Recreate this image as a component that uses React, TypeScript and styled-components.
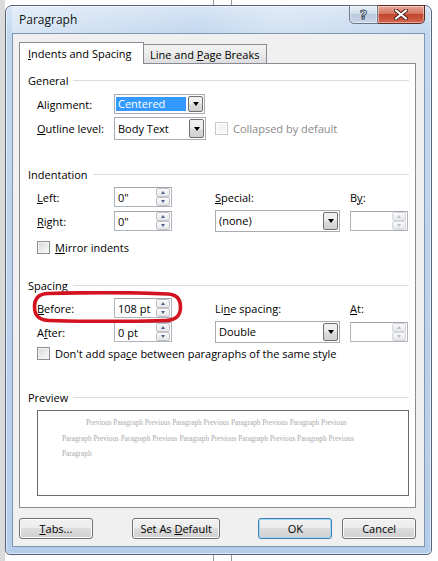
import styled, { createGlobalStyle } from "styled-components";

const GlobalStyle = createGlobalStyle`
  html, body {
    margin: 0;
    padding: 0;
  }
  body {
    font-family: "Open Sans", "Liberation Sans", sans-serif;
    font-size: 11px;
    color: #000;
  }
`;

// page behind the dialog: white sheet with two thin rules
const Page = styled.div`
  width: 438px;
  height: 561px;
  box-sizing: border-box;
  padding: 5px 6px 6px 5px;
  background:
    linear-gradient(to right, #dadada 0 5px, transparent 5px),
    linear-gradient(
      to right,
      transparent 213px,
      #9a9a9a 213px,
      #9a9a9a 214px,
      transparent 214px,
      transparent 231px,
      #9a9a9a 231px,
      #9a9a9a 232px,
      transparent 232px
    ),
    #fdfdfd;
`;

const Window = styled.div`
  width: 427px;
  height: 550px;
  box-sizing: border-box;
  border: 1px solid #56657a;
  border-radius: 7px 7px 5px 5px;
  background: linear-gradient(180deg, #d7e5f5 0, #c3d8ef 27px, #b6cde9 100%);
  box-shadow: inset 0 0 0 1px rgba(255, 255, 255, 0.55);
  display: flex;
  flex-direction: column;
  padding: 0 6px 7px 6px;
`;

const TitleBar = styled.div`
  height: 27px;
  display: flex;
  align-items: flex-start;
  justify-content: space-between;
  background: linear-gradient(
    100deg,
    rgba(255, 255, 255, 0.35) 0%,
    rgba(255, 255, 255, 0) 45%,
    rgba(255, 255, 255, 0.25) 65%,
    rgba(255, 255, 255, 0) 100%
  );
`;

const Title = styled.span`
  margin: 6px 0 0 7px;
  line-height: 16px;
  font-size: 12px;
  color: #111;
`;

const Captions = styled.div`
  display: flex;
  margin-top: -1px;
  height: 19px;
`;

const CaptionButton = styled.div<{ $kind: "help" | "close" }>`
  box-sizing: border-box;
  width: ${(p) => (p.$kind === "help" ? 29 : 47)}px;
  height: 19px;
  display: flex;
  align-items: center;
  justify-content: center;
  border: 1px solid ${(p) => (p.$kind === "help" ? "#6a7889" : "#5b2b22")};
  border-left: ${(p) => (p.$kind === "close" ? "none" : undefined)};
  border-radius: ${(p) => (p.$kind === "help" ? "0 0 0 5px" : "0 0 5px 0")};
  background: ${(p) =>
    p.$kind === "help"
      ? "linear-gradient(180deg, #e7eef7 0%, #d2deec 45%, #b9c9dc 50%, #c9d7e8 100%)"
      : "linear-gradient(180deg, #e9a899 0%, #d5745f 45%, #c2452d 50%, #d3664f 100%)"};
  box-shadow: inset 0 0 0 1px rgba(255, 255, 255, 0.45);
`;

const HelpGlyph = styled.span`
  font-family: "DejaVu Sans", sans-serif;
  font-weight: bold;
  font-size: 13px;
  line-height: 13px;
  color: #eef3f9;
  -webkit-text-stroke: 0.9px #3c4a5b;
`;

const Client = styled.div`
  flex: 1;
  background: #f0f0f0;
  border: 1px solid #8095b1;
  display: flex;
  flex-direction: column;
  padding: 8px 8px 7px 6px;
`;

const TabStrip = styled.div`
  display: flex;
  align-items: flex-end;
  height: 21px;
`;

const Tab = styled.div<{ $active?: boolean; $w: number }>`
  position: relative;
  z-index: ${(p) => (p.$active ? 1 : 0)};
  box-sizing: border-box;
  width: ${(p) => p.$w}px;
  height: ${(p) => (p.$active ? 22 : 19)}px;
  margin-bottom: ${(p) => (p.$active ? -1 : 0)}px;
  border: 1px solid #898c95;
  border-bottom: none;
  border-left: ${(p) => (p.$active ? undefined : "none")};
  background: ${(p) =>
    p.$active ? "#fff" : "linear-gradient(180deg, #f3f3f3 0%, #ebebeb 50%, #dedede 100%)"};
  display: flex;
  align-items: center;
  padding-left: ${(p) => (p.$active ? 8 : 6)}px;
  white-space: nowrap;
`;

const Panel = styled.div`
  height: 445px;
  box-sizing: border-box;
  background: #fff;
  border: 1px solid #898c95;
  padding: 9px 6px 0 8px;
  display: flex;
  flex-direction: column;
`;

const SectionHead = styled.div<{ $top?: number }>`
  display: flex;
  align-items: center;
  height: 14px;
  margin-top: ${(p) => p.$top ?? 0}px;
  white-space: nowrap;
  &::after {
    content: "";
    flex: 1;
    height: 1px;
    margin-left: 5px;
    background: #dcdcdc;
  }
`;

const FieldGrid = styled.div<{ $top: number; $rows: string; $gap: number }>`
  position: relative;
  display: grid;
  grid-template-columns: 77px 58px 43px 125px 10px 58px;
  grid-template-rows: ${(p) => p.$rows};
  row-gap: ${(p) => p.$gap}px;
  align-items: center;
  padding-left: 9px;
  margin-top: ${(p) => p.$top}px;
`;

const Cell = styled.div<{ $col: string }>`
  grid-column: ${(p) => p.$col};
  display: flex;
  align-items: center;
  white-space: nowrap;
`;

const U = styled.span`
  text-decoration: underline;
`;

const Combo = styled.div<{ $w: number; $h: number }>`
  box-sizing: border-box;
  width: ${(p) => p.$w}px;
  height: ${(p) => p.$h}px;
  border: 1px solid #a7abb2;
  background: #fff;
  display: flex;
  align-items: center;
  padding: 1px;
`;

const ComboValue = styled.span<{ $selected?: boolean }>`
  flex: 1;
  align-self: center;
  margin-right: 2px;
  padding: 0 2px;
  line-height: 14px;
  color: ${(p) => (p.$selected ? "#fff" : "#000")};
  background: ${(p) => (p.$selected ? "#3399ff" : "transparent")};
`;

const ComboArrow = styled.span`
  align-self: stretch;
  box-sizing: border-box;
  width: 15px;
  border: 1px solid #707070;
  border-radius: 2px;
  background: linear-gradient(180deg, #f2f2f2 0%, #ebebeb 50%, #dddddd 50%, #cfcfcf 100%);
  display: flex;
  align-items: center;
  justify-content: center;
  &::after {
    content: "";
    border-left: 3.5px solid transparent;
    border-right: 3.5px solid transparent;
    border-top: 4px solid #000;
  }
`;

const Spin = styled.div`
  box-sizing: border-box;
  width: 58px;
  height: 20px;
  border: 1px solid #b1b4ba;
  border-top-color: #a3a6ad;
  background: #fff;
  display: flex;
  align-items: center;
`;

const SpinValue = styled.span`
  flex: 1;
  padding-left: 3px;
`;

const SpinButtons = styled.div`
  display: flex;
  flex-direction: column;
  width: 14px;
  height: 18px;
  margin-right: 1px;
`;

const SpinBtn = styled.span<{ $down?: boolean; $disabled?: boolean }>`
  flex: 1;
  box-sizing: border-box;
  border: 1px solid ${(p) => (p.$disabled ? "#d3d6da" : "#bfc3c9")};
  border-radius: 2px;
  background: linear-gradient(180deg, #fafafa, #e6e6e6);
  display: flex;
  align-items: center;
  justify-content: center;
  &::after {
    content: "";
    border-left: 2.5px solid transparent;
    border-right: 2.5px solid transparent;
    ${(p) => (p.$down ? "border-top" : "border-bottom")}: 3px solid
      ${(p) => (p.$disabled ? "#b8c2cf" : "#4d6589")};
  }
`;

const CheckRow = styled.div<{ $top?: number; $indent?: number; $disabled?: boolean }>`
  display: flex;
  align-items: center;
  gap: 5px;
  height: 13px;
  margin-top: ${(p) => p.$top ?? 0}px;
  margin-left: ${(p) => p.$indent ?? 0}px;
  white-space: nowrap;
  color: ${(p) => (p.$disabled ? "#8a8a8a" : "#000")};
`;

const Check = styled.span<{ $disabled?: boolean }>`
  flex: none;
  box-sizing: border-box;
  width: 13px;
  height: 13px;
  border: 1px solid ${(p) => (p.$disabled ? "#c8c8c8" : "#8e8f8f")};
  background: ${(p) =>
    p.$disabled ? "#f6f6f6" : "linear-gradient(135deg, #d2d3d5 0%, #eeeeef 60%, #fbfbfb 100%)"};
  box-shadow: inset 0 0 0 1px ${(p) => (p.$disabled ? "#fff" : "#f4f4f4")};
`;

const PreviewBox = styled.div`
  box-sizing: border-box;
  width: 372px;
  height: 86px;
  margin: 6px 0 0 9px;
  border: 1px solid #6a6a6a;
  background: #fff;
  padding-top: 4px;
  overflow: hidden;
`;

const PreviewLine = styled.div<{ $indent: number }>`
  padding-left: ${(p) => p.$indent}px;
  font-family: "Liberation Serif", serif;
  font-size: 7.3px;
  line-height: 15.5px;
  color: #a9a9a9;
  white-space: nowrap;
`;

const Annotation = styled.svg`
  position: absolute;
  left: 4px;
  top: -7px;
  pointer-events: none;
`;

const ButtonRow = styled.div`
  display: flex;
  margin-top: 10px;
`;

const Button = styled.div<{ $w: number; $gap?: number; $default?: boolean }>`
  box-sizing: border-box;
  width: ${(p) => p.$w}px;
  height: 21px;
  margin-left: ${(p) => p.$gap ?? 0}px;
  border: 1px solid ${(p) => (p.$default ? "#3c7fb1" : "#707070")};
  border-radius: 3px;
  background: linear-gradient(180deg, #f2f2f2 0%, #ebebeb 50%, #dddddd 50%, #cfcfcf 100%);
  box-shadow: inset 0 0 0 1px ${(p) => (p.$default ? "#a6d8f5" : "#fbfbfb")};
  display: flex;
  align-items: center;
  justify-content: center;
  white-space: nowrap;
`;

const previous = "Previous Paragraph";

export default function App() {
  return (
    <>
      <GlobalStyle />
      <Page>
        <Window>
          <TitleBar>
            <Title>Paragraph</Title>
            <Captions>
              <CaptionButton $kind="help">
                <HelpGlyph>?</HelpGlyph>
              </CaptionButton>
              <CaptionButton $kind="close">
                <svg width="14" height="11" viewBox="0 0 14 11">
                  <path d="M2 1.5 L12 9.5 M12 1.5 L2 9.5" stroke="#4a1d14" strokeWidth="4" strokeLinecap="round" />
                  <path d="M2 1.5 L12 9.5 M12 1.5 L2 9.5" stroke="#fff" strokeWidth="2.2" strokeLinecap="round" />
                </svg>
              </CaptionButton>
            </Captions>
          </TitleBar>

          <Client>
            <TabStrip>
              <Tab $active $w={125}>
                <span>
                  <U>I</U>ndents and Spacing
                </span>
              </Tab>
              <Tab $w={123}>
                <span>
                  Line and <U>P</U>age Breaks
                </span>
              </Tab>
            </TabStrip>

            <Panel>
              <SectionHead>General</SectionHead>
              <FieldGrid $top={7} $rows="20px 23px" $gap={3}>
                <Cell $col="1">
                  <span>
                    Ali<U>g</U>nment:
                  </span>
                </Cell>
                <Cell $col="2 / 4">
                  <Combo $w={91} $h={20}>
                    <ComboValue $selected>Centered</ComboValue>
                    <ComboArrow />
                  </Combo>
                </Cell>
                <Cell $col="1">
                  <span>
                    <U>O</U>utline level:
                  </span>
                </Cell>
                <Cell $col="2 / 4">
                  <Combo $w={92} $h={23}>
                    <ComboValue>Body Text</ComboValue>
                    <ComboArrow />
                  </Combo>
                </Cell>
                <Cell $col="4 / 7">
                  <CheckRow $disabled>
                    <Check $disabled />
                    Collapsed by default
                  </CheckRow>
                </Cell>
              </FieldGrid>

              <SectionHead $top={27}>Indentation</SectionHead>
              <FieldGrid $top={6} $rows="20px 20px" $gap={4}>
                <Cell $col="1">
                  <span>
                    <U>L</U>eft:
                  </span>
                </Cell>
                <Cell $col="2">
                  <Spin>
                    <SpinValue>0"</SpinValue>
                    <SpinButtons>
                      <SpinBtn />
                      <SpinBtn $down />
                    </SpinButtons>
                  </Spin>
                </Cell>
                <Cell $col="4">
                  <span>
                    <U>S</U>pecial:
                  </span>
                </Cell>
                <Cell $col="6">
                  <span>
                    B<U>y</U>:
                  </span>
                </Cell>
                <Cell $col="1">
                  <span>
                    <U>R</U>ight:
                  </span>
                </Cell>
                <Cell $col="2">
                  <Spin>
                    <SpinValue>0"</SpinValue>
                    <SpinButtons>
                      <SpinBtn />
                      <SpinBtn $down />
                    </SpinButtons>
                  </Spin>
                </Cell>
                <Cell $col="4">
                  <Combo $w={125} $h={22}>
                    <ComboValue>(none)</ComboValue>
                    <ComboArrow />
                  </Combo>
                </Cell>
                <Cell $col="6">
                  <Spin>
                    <SpinValue />
                    <SpinButtons>
                      <SpinBtn $disabled />
                      <SpinBtn $down $disabled />
                    </SpinButtons>
                  </Spin>
                </Cell>
              </FieldGrid>
              <CheckRow $top={10} $indent={9}>
                <Check />
                <span>
                  <U>M</U>irror indents
                </span>
              </CheckRow>

              <SectionHead $top={24}>Spacing</SectionHead>
              <FieldGrid $top={6} $rows="20px 20px" $gap={4}>
                <Cell $col="1">
                  <span>
                    <U>B</U>efore:
                  </span>
                </Cell>
                <Cell $col="2">
                  <Spin>
                    <SpinValue>108 pt</SpinValue>
                    <SpinButtons>
                      <SpinBtn />
                      <SpinBtn $down />
                    </SpinButtons>
                  </Spin>
                </Cell>
                <Cell $col="4">
                  <span>
                    Li<U>n</U>e spacing:
                  </span>
                </Cell>
                <Cell $col="6">
                  <span>
                    <U>A</U>t:
                  </span>
                </Cell>
                <Cell $col="1">
                  <span>
                    A<U>f</U>ter:
                  </span>
                </Cell>
                <Cell $col="2">
                  <Spin>
                    <SpinValue>0 pt</SpinValue>
                    <SpinButtons>
                      <SpinBtn />
                      <SpinBtn $down />
                    </SpinButtons>
                  </Spin>
                </Cell>
                <Cell $col="4">
                  <Combo $w={125} $h={22}>
                    <ComboValue>Double</ComboValue>
                    <ComboArrow />
                  </Combo>
                </Cell>
                <Cell $col="6">
                  <Spin>
                    <SpinValue />
                    <SpinButtons>
                      <SpinBtn $disabled />
                      <SpinBtn $down $disabled />
                    </SpinButtons>
                  </Spin>
                </Cell>
                {/* hand-drawn red mark around the Before field */}
                <Annotation width="151" height="32" viewBox="0 0 151 32">
                  <path
                    d="M16 2.5 C50 1.5 105 1.5 136 3 C146 3.5 148.5 9 148.5 16 C148.5 24 145 29 134 29.5 C100 30.5 50 30.5 17 29.5 C6 29 2.5 24 2.5 16 C2.5 8 6 2.8 16 2.5 Z"
                    fill="none"
                    stroke="#d3131f"
                    strokeWidth="3.6"
                  />
                </Annotation>
              </FieldGrid>
              <CheckRow $top={5} $indent={9}>
                <Check />
                <span>
                  Don't add spa<U>c</U>e between paragraphs of the same style
                </span>
              </CheckRow>

              <SectionHead $top={30}>Preview</SectionHead>
              <PreviewBox>
                <PreviewLine $indent={48}>
                  {Array(4).fill(previous).join(" ")} Previous
                </PreviewLine>
                <PreviewLine $indent={24}>
                  Paragraph {Array(4).fill(previous).join(" ")} Previous
                </PreviewLine>
                <PreviewLine $indent={24}>Paragraph</PreviewLine>
              </PreviewBox>
            </Panel>

            <ButtonRow>
              <Button $w={74}>
                <span>
                  <U>T</U>abs...
                </span>
              </Button>
              <Button $w={89} $gap={39}>
                <span>
                  Set As <U>D</U>efault
                </span>
              </Button>
              <Button $w={74} $gap={38} $default>
                OK
              </Button>
              <Button $w={74} $gap={10}>
                Cancel
              </Button>
            </ButtonRow>
          </Client>
        </Window>
      </Page>
    </>
  );
}
